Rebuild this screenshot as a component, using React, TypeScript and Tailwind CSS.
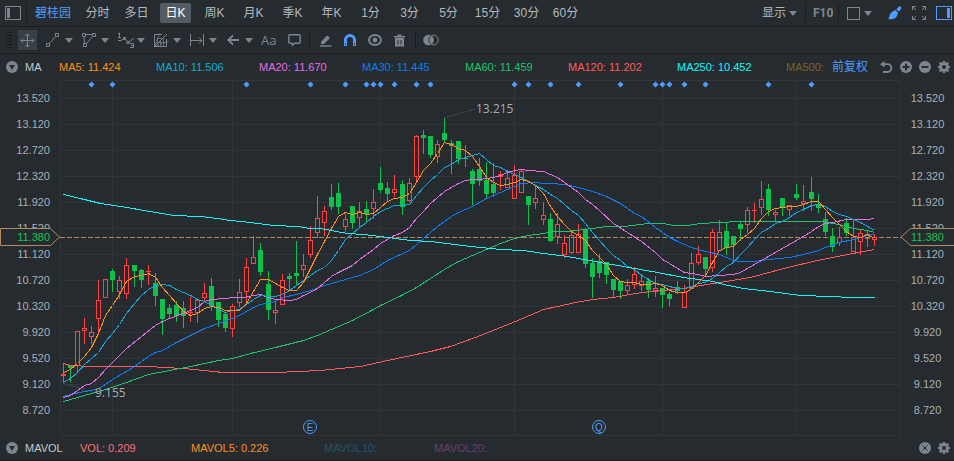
import type { ReactNode } from "react";

type Candle = [x: number, up: 0 | 1, open: number, close: number, high: number, low: number];

// x, rising flag, body top, body bottom, wick top, wick bottom
const candles: Candle[] = [
  [63, 1, 374, 376, 363, 383], [70, 0, 365, 368, 365, 382], [77, 1, 331, 366, 331, 372],
  [84, 1, 328, 331, 318, 344], [91, 1, 332, 337, 326, 344], [98, 1, 300, 319, 280, 335],
  [105, 1, 279, 298, 279, 298], [112, 0, 271, 280, 269, 292], [119, 1, 280, 292, 276, 299],
  [126, 1, 265, 294, 258, 299], [134, 0, 265, 271, 265, 287], [141, 0, 270, 280, 269, 288],
  [148, 1, 271, 272, 265, 285], [155, 0, 283, 296, 273, 306], [162, 0, 299, 319, 299, 335],
  [169, 0, 308, 314, 304, 318], [176, 0, 305, 316, 301, 322], [183, 0, 308, 316, 301, 328],
  [190, 1, 312, 313, 297, 322], [197, 1, 300, 313, 300, 323], [204, 1, 293, 298, 283, 302],
  [211, 0, 286, 306, 278, 311], [218, 0, 302, 320, 302, 327], [225, 0, 314, 328, 312, 332],
  [232, 1, 306, 329, 304, 337], [239, 1, 292, 303, 279, 307], [246, 1, 267, 292, 258, 303],
  [253, 1, 257, 264, 236, 264], [260, 0, 250, 272, 243, 276], [268, 0, 284, 310, 271, 320],
  [275, 1, 310, 313, 302, 324], [282, 1, 280, 305, 274, 305], [289, 0, 276, 279, 273, 291],
  [296, 0, 273, 276, 241, 286], [303, 1, 265, 270, 254, 277], [310, 1, 240, 255, 226, 258],
  [317, 1, 218, 233, 196, 238], [324, 1, 211, 223, 206, 236], [331, 0, 197, 207, 184, 210],
  [338, 0, 193, 207, 183, 214], [345, 1, 219, 227, 214, 232], [352, 0, 206, 223, 206, 229],
  [359, 1, 211, 218, 202, 228], [366, 0, 209, 214, 201, 223], [373, 1, 202, 209, 189, 219],
  [380, 0, 183, 190, 167, 193], [387, 0, 188, 194, 182, 202], [394, 1, 189, 193, 175, 197],
  [402, 0, 184, 207, 180, 215], [409, 1, 183, 201, 178, 202], [416, 1, 136, 177, 135, 181],
  [423, 0, 135, 138, 130, 154], [430, 0, 136, 155, 136, 158], [437, 1, 144, 157, 140, 163],
  [444, 0, 133, 140, 118, 143], [451, 0, 143, 146, 140, 174], [458, 0, 141, 159, 141, 164],
  [465, 0, 158, 159, 145, 167], [472, 0, 171, 184, 169, 205], [479, 0, 169, 181, 158, 186],
  [486, 0, 180, 194, 162, 198], [493, 0, 184, 193, 163, 197], [500, 1, 174, 177, 171, 190],
  [507, 1, 178, 188, 170, 188], [514, 1, 175, 199, 165, 199], [521, 1, 171, 193, 169, 193],
  [528, 0, 196, 205, 196, 225], [535, 1, 198, 203, 186, 209], [543, 1, 215, 220, 202, 225],
  [550, 0, 219, 241, 213, 242], [557, 1, 224, 237, 213, 244], [564, 1, 243, 255, 235, 258],
  [571, 1, 235, 253, 230, 254], [578, 1, 234, 253, 224, 253], [585, 0, 230, 264, 228, 268],
  [592, 0, 263, 277, 258, 298], [599, 0, 261, 273, 254, 278], [606, 0, 262, 275, 262, 284],
  [613, 0, 279, 290, 279, 298], [620, 0, 281, 291, 281, 299], [627, 1, 285, 291, 279, 294],
  [634, 1, 274, 285, 267, 289], [641, 1, 281, 286, 274, 291], [648, 0, 281, 290, 278, 298],
  [655, 1, 288, 291, 276, 297], [662, 0, 288, 295, 288, 308], [669, 0, 294, 299, 292, 306],
  [677, 0, 287, 291, 281, 294], [684, 1, 292, 308, 285, 308], [691, 1, 263, 289, 253, 289],
  [698, 1, 254, 263, 246, 265], [705, 0, 257, 269, 257, 275], [712, 1, 232, 268, 229, 272],
  [719, 1, 232, 251, 220, 251], [726, 0, 231, 248, 223, 255], [733, 0, 236, 245, 236, 263],
  [740, 0, 224, 229, 222, 241], [747, 1, 210, 225, 207, 233], [754, 1, 210, 211, 203, 223],
  [761, 1, 199, 208, 181, 215], [768, 0, 189, 210, 184, 216], [775, 1, 212, 215, 210, 222],
  [782, 0, 198, 207, 198, 216], [789, 1, 205, 210, 205, 216], [796, 0, 194, 198, 184, 200],
  [803, 1, 201, 204, 185, 211], [811, 0, 192, 199, 177, 211], [818, 0, 205, 208, 194, 213],
  [825, 0, 219, 232, 212, 236], [832, 0, 236, 247, 228, 252], [839, 1, 237, 243, 227, 246],
  [846, 0, 223, 233, 218, 236], [853, 1, 237, 252, 220, 252], [860, 1, 233, 242, 230, 255],
  [867, 1, 234, 239, 230, 247], [874, 1, 237, 240, 234, 246],
];

const averages: { name: string; color: string; points: string }[] = [
  {
    name: "MA120",
    color: "#ff5c5c",
    points:
      "63,363 70,365 90,366 117,366 150,366 163,367 183,368 203,370 223,372 250,372 275,372 320,370 360,366 387,360 430,351 450,346 475,337 500,327 515,321 543,309 557,306 575,302 592,299 613,297 641,292 663,290 673,289 691,287 700,285 720,282 750,277 787,267 817,260 847,254 874,249",
  },
  {
    name: "MA60",
    color: "#23c26f",
    points:
      "63,401 84,395 105,389 126,382 148,374 169,370 190,366 204,363 218,360 232,358 250,353 275,347 303,340 317,335 331,329 352,320 373,309 380,305 401,295 416,287 430,278 444,269 458,261 472,255 486,249 500,243 514,238 528,235 543,233 553,231 567,231 592,228 606,226 623,226 648,223 663,223 673,225 687,225 700,223 717,222 740,221 820,221 832,223 839,224 853,228 867,230 874,232",
  },
  {
    name: "MA30",
    color: "#0a7cf5",
    points:
      "63,396 70,394 84,391 91,390 98,388 105,384 112,379 126,371 134,366 148,356 155,352 162,350 176,342 190,335 204,328 218,323 232,318 239,315 253,307 260,304 275,301 282,297 296,294 310,290 324,285 338,281 359,275 373,269 387,260 409,250 416,244 430,232 437,226 451,216 458,212 472,206 486,198 500,192 514,186 521,183 535,182 543,183 550,183 564,184 578,187 592,191 606,196 620,203 634,213 641,216 655,227 669,237 677,241 691,247 705,251 719,254 733,260 740,261 754,261 768,259 789,257 803,254 818,250 825,247 839,242 853,239 867,235 874,234",
  },
  {
    name: "MA20",
    color: "#e66ee0",
    points:
      "63,397 70,395 77,390 84,385 91,383 98,377 105,369 112,362 126,348 141,336 155,325 162,321 169,318 183,313 190,310 197,307 204,301 211,299 225,298 232,297 243,297 253,295 260,294 268,297 275,299 289,300 296,299 303,295 310,292 317,288 324,282 331,276 338,272 352,265 359,259 373,249 380,243 387,239 394,235 402,232 409,227 416,218 423,211 430,203 437,197 444,191 451,187 458,183 465,180 472,179 479,179 486,178 493,177 500,175 507,172 514,170 521,169 528,170 543,171 550,174 557,177 564,182 571,187 578,192 585,199 592,204 599,210 613,223 627,232 641,241 655,252 662,259 669,263 677,268 684,272 698,274 705,276 719,275 733,274 740,272 747,268 754,264 761,260 775,252 789,244 796,240 803,236 811,231 818,226 825,223 832,222 846,219 867,219 874,218",
  },
  {
    name: "MA10",
    color: "#14a8dc",
    points:
      "63,382 70,378 77,372 84,364 91,358 98,352 105,341 112,333 119,324 126,313 134,303 141,295 148,289 155,285 162,284 169,285 176,289 183,292 190,295 197,299 204,301 211,305 218,309 225,312 232,310 239,309 246,304 253,299 260,295 268,296 275,296 282,294 289,290 296,285 303,280 310,275 317,270 324,267 331,260 338,250 345,239 352,233 359,227 366,222 373,216 380,211 387,208 394,205 402,205 409,204 416,195 423,187 430,180 437,174 444,167 451,164 458,159 465,157 472,155 479,153 486,159 493,165 500,167 507,171 514,174 521,177 528,181 535,185 543,189 550,194 557,198 564,204 571,210 578,215 585,223 592,232 599,240 606,248 613,255 620,260 627,266 634,269 641,275 648,279 655,283 662,284 669,286 677,288 684,288 691,286 698,283 705,282 712,278 719,272 726,266 733,262 740,254 747,247 754,239 761,232 768,228 775,223 782,221 789,217 796,212 803,209 811,205 818,204 825,206 832,211 839,214 846,216 853,219 860,222 867,226 874,230",
  },
  {
    name: "MA5",
    color: "#ff8f1f",
    points:
      "63,372 70,369 77,363 84,356 91,347 98,333 105,315 112,305 119,294 126,281 134,276 141,275 148,273 155,277 162,287 169,295 176,303 183,311 190,315 197,313 204,308 211,306 218,307 225,310 232,310 239,310 246,303 253,291 260,279 268,279 275,283 282,287 289,290 296,290 303,282 310,268 317,254 324,241 331,228 338,216 345,212 352,214 359,212 366,214 373,213 380,207 387,201 394,198 402,197 409,193 416,182 423,170 430,163 437,153 444,142 451,144 458,148 465,150 472,156 479,166 486,177 493,182 500,185 507,184 514,182 521,179 528,181 535,185 543,193 550,206 557,216 564,224 571,231 578,235 585,240 592,250 599,257 606,264 613,275 620,281 627,282 634,282 641,284 648,284 655,283 662,285 669,290 677,292 684,292 691,289 698,282 705,275 712,262 719,250 726,247 733,246 740,239 747,234 754,228 761,218 768,211 775,208 782,207 789,206 796,206 803,204 811,201 818,201 825,209 832,217 839,224 846,231 853,236 860,237 867,234 874,238",
  },
  {
    name: "MA250",
    color: "#12f7f7",
    points:
      "63,194 80,198 100,203 127,207 143,210 173,215 200,216 217,218 230,220 250,222 273,225 297,226 310,228 320,228 347,233 363,234 380,236 410,240 430,241 447,243 470,246 500,249 523,250 543,253 567,256 600,262 623,266 657,272 683,277 713,281 723,284 743,288 770,291 800,295 830,296 850,297 874,297",
  },
];

const events = [
  91, 112, 246, 310, 345, 366, 373, 380, 394, 416, 430, 514, 528, 550, 578, 620, 655, 662, 669, 684,
  705, 768, 811,
];
const gridX = [60, 112, 232, 380, 514, 662, 796, 900];
const prices = [
  "13.520", "13.120", "12.720", "12.320", "11.920", "11.520", "11.120", "10.720", "10.320", "9.920",
  "9.520", "9.120", "8.720",
];
const periods = [
  "分时", "多日", "日K", "周K", "月K", "季K", "年K", "1分", "3分", "5分", "15分", "30分", "60分",
];
const legend = [
  { text: "MA5: 11.424", style: "w-[97px] text-[#ff8f1f]" },
  { text: "MA10: 11.506", style: "w-[103px] text-[#14a8dc]" },
  { text: "MA20: 11.670", style: "w-[103px] text-[#e66ee0]" },
  { text: "MA30: 11.445", style: "w-[103px] text-[#0a7cf5]" },
  { text: "MA60: 11.459", style: "w-[103px] text-[#23c26f]" },
  { text: "MA120: 11.202", style: "w-[109px] text-[#ff5c5c]" },
  { text: "MA250: 10.452", style: "w-[109px] text-[#12f7f7]" },
  { text: "MA500:", style: "w-[46px] text-[#7b652e]" },
];

function Caret() {
  return (
    <svg width="8" height="5" viewBox="0 0 8 5" aria-hidden="true">
      <path d="M0 0H8L4 5Z" fill="#7d868f" />
    </svg>
  );
}

function Divider() {
  return <span className="h-5 w-px shrink-0 bg-[#1a1e21]" />;
}

function Tool({ label, children }: { label: string; children: ReactNode }) {
  return (
    <button aria-label={label} className="flex w-9 shrink-0 items-center gap-[3px]">
      <svg width="16" height="16" viewBox="0 0 16 16" fill="none" stroke="#7d868f" aria-hidden="true">
        {children}
      </svg>
      <Caret />
    </button>
  );
}

function Gear() {
  return (
    <svg width="12" height="12" viewBox="0 0 12 12" aria-hidden="true">
      <g fill="#7d868f">
        <rect x="4.7" y="0" width="2.6" height="12" />
        <rect x="4.7" y="0" width="2.6" height="12" transform="rotate(45 6 6)" />
        <rect x="4.7" y="0" width="2.6" height="12" transform="rotate(90 6 6)" />
        <rect x="4.7" y="0" width="2.6" height="12" transform="rotate(135 6 6)" />
        <circle cx="6" cy="6" r="4.4" />
      </g>
      <circle cx="6" cy="6" r="2" fill="#262b2f" />
    </svg>
  );
}

function Disc({ mark }: { mark: string }) {
  return (
    <svg width="12" height="12" viewBox="0 0 12 12" aria-hidden="true">
      <circle cx="6" cy="6" r="6" fill="#7d868f" />
      <path d={mark} stroke="#262b2f" strokeWidth="2" fill="none" />
    </svg>
  );
}

function Collapse() {
  return (
    <svg width="12" height="12" viewBox="0 0 12 12" aria-hidden="true">
      <circle cx="6" cy="6" r="6" fill="#7d868f" />
      <path d="M3 4H9L6 9Z" fill="#262b2f" />
    </svg>
  );
}

function PeriodBar() {
  return (
    <header className="flex h-[27px] items-center border-b border-[#1a1e21] text-xs text-[#b4babf]">
      <button aria-label="左侧栏" className="ml-[5px]">
        <svg width="16" height="14" viewBox="0 0 16 14" aria-hidden="true">
          <rect x="0.5" y="0.5" width="15" height="13" fill="none" stroke="#7d868f" />
          <rect x="2" y="2" width="3" height="10" fill="#7d868f" />
        </svg>
      </button>
      <span className="mr-2 ml-[5px] flex">
        <Divider />
      </span>
      <button className="mr-[11px] whitespace-nowrap text-[#4f9bff]">碧桂园</button>
      <nav className="flex flex-1 gap-2">
        {periods.map((p) => (
          <button
            key={p}
            className={
              p === "日K"
                ? "h-5 w-[31px] shrink-0 rounded-xs bg-[#535b64] text-center whitespace-nowrap text-white"
                : "h-5 w-[31px] shrink-0 text-center whitespace-nowrap"
            }
          >
            {p}
          </button>
        ))}
      </nav>
      <button className="mr-2 flex items-center gap-[3px] whitespace-nowrap">
        显示
        <Caret />
      </button>
      <Divider />
      <button className="mx-[7px] w-[18px] text-center font-['Liberation_Sans_Narrow','Roboto',sans-serif] text-xs font-bold text-[#7d868f]">
        F10
      </button>
      <Divider />
      <button aria-label="画框" className="mr-4 ml-2 flex items-center gap-1">
        <svg width="13" height="13" viewBox="0 0 13 13" aria-hidden="true">
          <rect x="0.5" y="0.5" width="12" height="12" fill="none" stroke="#7d868f" />
        </svg>
        <Caret />
      </button>
      <button aria-label="画笔" className="mr-[10px]">
        <svg width="14" height="14" viewBox="0 0 14 14" aria-hidden="true">
          <path d="M0 13C1.500 12 1.200 9 2.500 7.500C4 5.500 6 4.500 7.500 4L10 6.500C10 9 8.500 11.500 6.500 12.500C4.500 13.500 2 13.200 0 13Z" fill="#4f9bff" />
          <path d="M8.300 3.200L10.800 0.500C11.800 -0.300 13.800 1 13.300 2.500L11 5.800Z" fill="#4f9bff" />
        </svg>
      </button>
      <button aria-label="全屏" className="mr-[10px]">
        <svg width="14" height="14" viewBox="0 0 14 14" fill="none" stroke="#7d868f" aria-hidden="true">
          <path d="M0.500 4V0.500H4M0.500 0.500L4 4M10 0.500H13.500V4M13.500 0.500L10 4M0.500 10V13.500H4M0.500 13.500L4 10M10 13.500H13.500V10M13.500 13.500L10 10" />
        </svg>
      </button>
      <button aria-label="右侧栏" className="mr-[2px]">
        <svg width="16" height="14" viewBox="0 0 16 14" aria-hidden="true">
          <rect x="0.5" y="0.5" width="15" height="13" fill="none" stroke="#4f9bff" />
          <rect x="11" y="2" width="3" height="10" fill="#4f9bff" />
        </svg>
      </button>
    </header>
  );
}

function DrawingBar() {
  return (
    <div className="flex h-[27px] items-center border-b border-[#1a1e21] text-[#7d868f]">
      <svg className="mr-[6px] ml-[7px]" width="5" height="18" viewBox="0 0 5 18" aria-hidden="true">
        <path d="M0 1.500H5M0 4.500H5M0 7.500H5M0 10.500H5M0 13.500H5M0 16.500H5" stroke="#15181a" />
      </svg>
      <button aria-label="移动" className="mr-[9px] flex h-5 w-[19px] items-center justify-center bg-[#383f46]">
        <svg width="15" height="15" viewBox="0 0 15 15" fill="none" stroke="#7d868f" aria-hidden="true">
          <path d="M7.500 1V14M1 7.500H14M5.500 3L7.500 1L9.500 3M5.500 12L7.500 14L9.500 12M3 5.500L1 7.500L3 9.500M12 5.500L14 7.500L12 9.500" />
        </svg>
      </button>
      <Tool label="线段">
        <path d="M0.500 11.500H3.500V14.500H0.500ZM9.500 1.500H12.500V4.500H9.500ZM3.500 11.500L9.500 4.500" />
      </Tool>
      <Tool label="图形">
        <path d="M0.500 1.500H3.500V4.500H0.500ZM10.500 1.500H13.500V4.500H10.500ZM1.500 11.500H4.500V14.500H1.500ZM3.500 2.500H10.500M2 4.500L2.500 11.500M4.500 11.500L10.500 4.500" />
      </Tool>
      <Tool label="波浪">
        <path d="M0 2L1.500 1V5M0 5.500H3M0 8.500H3L6.500 6L10 10.500L15.500 6.500M12 11.500H15.500V15.500H12M13 13.500H15.500M5.500 5.500H7.500V7.500H5.500ZM9 9.500H11V11.500H9Z" />
      </Tool>
      <Tool label="江恩">
        <path d="M8 2.500H0.500V14.500H12.500V7M0.500 14.500L13 2" />
        <path d="M0.500 14.500L6 1M0.500 14.500L15 9" strokeDasharray="2 1" />
        <path d="M3 6.500H9M3.500 6V12M6.500 8V14M3 10.500H12M9.500 6V14" strokeOpacity="0.600" />
      </Tool>
      <Tool label="测距">
        <path d="M0.500 2V14M13.500 2V14M1 8.500H12M9 5.500L12 8.500L9 11.500" />
      </Tool>
      <Tool label="箭头">
        <path d="M2 8H13M7 3.500L2.200 8L7 12.500" strokeWidth="1.8" />
      </Tool>
      <button className="mr-3 -ml-px font-['Open_Sans',sans-serif] text-[13px] leading-5">Aa</button>
      <button aria-label="文字框" className="mr-2">
        <svg width="13" height="14" viewBox="0 0 13 14" fill="none" stroke="#7d868f" aria-hidden="true">
          <path
            d="M2 1.700H11A1.200 1.200 0 0 1 12.200 2.900V9A1.200 1.200 0 0 1 11 10.200H6.500L4.500 12.200L4 10.200H2A1.200 1.200 0 0 1 0.800 9V2.900A1.200 1.200 0 0 1 2 1.700Z"
            strokeWidth="1.400"
          />
        </svg>
      </button>
      <Divider />
      <button aria-label="编辑" className="mr-3 ml-[10px]">
        <svg width="12" height="13" viewBox="0 0 12 13" aria-hidden="true">
          <path d="M1 8L7 1.500L10 4L4 10H1Z" fill="#7d868f" />
          <path d="M0 12H11.500" stroke="#7d868f" strokeWidth="1.400" />
        </svg>
      </button>
      <button aria-label="磁铁" className="mr-3">
        <svg width="12" height="12" viewBox="0 0 12 12" fill="none" aria-hidden="true">
          <path d="M1.500 12V6A4.500 4.500 0 0 1 10.500 6V12" stroke="#4f9bff" strokeWidth="3" />
          <path d="M1 9.500H2V11H1ZM10 9.500H11V11H10Z" fill="#262b2f" />
        </svg>
      </button>
      <button aria-label="显示画线" className="mr-3">
        <svg width="14" height="12" viewBox="0 0 14 12" fill="none" stroke="#7d868f" aria-hidden="true">
          <ellipse cx="7" cy="6" rx="6" ry="5" strokeWidth="2" />
          <circle cx="7" cy="6" r="2" fill="#7d868f" />
        </svg>
      </button>
      <button aria-label="删除" className="mr-[10px]">
        <svg width="11" height="13" viewBox="0 0 11 13" aria-hidden="true">
          <path d="M0 2H3.500V0.500H7.500V2H11V3.500H0ZM1 4H10V12.500H1Z" fill="#7d868f" />
          <path d="M4 6V10.500M7 6V10.500" stroke="#262b2f" />
        </svg>
      </button>
      <Divider />
      <button aria-label="对比" className="ml-[7px]">
        <svg width="16" height="12" viewBox="0 0 16 12" aria-hidden="true">
          <circle cx="10.500" cy="6" r="4.800" fill="none" stroke="#7d868f" />
          <circle cx="5.500" cy="6" r="5.300" fill="#7d868f" />
          <path d="M8.500 1.500A5.200 5.200 0 0 0 8.500 10.500" fill="none" stroke="#262b2f" />
        </svg>
      </button>
    </div>
  );
}

function AverageLegend() {
  return (
    <div className="flex h-[26px] items-center pl-[6px] text-[11px]">
      <button aria-label="收起" className="mr-[7px]">
        <Collapse />
      </button>
      <span className="w-[34px] text-[#c3c9ce]">MA</span>
      {legend.map((item) => (
        <span key={item.text} className={`shrink-0 whitespace-nowrap ${item.style}`}>
          {item.text}
        </span>
      ))}
      <button className="text-xs whitespace-nowrap text-[#4f9bff]">前复权</button>
      <div className="mr-1 ml-auto flex shrink-0 gap-[7px]">
        <button aria-label="撤销">
          <svg width="13" height="12" viewBox="0 0 13 12" fill="none" aria-hidden="true">
            <path d="M2 3.200H7.500A3.900 3.900 0 0 1 7.500 11H3" stroke="#7d868f" strokeWidth="1.800" />
            <path d="M4.500 0V6.500L0 3.200Z" fill="#7d868f" />
          </svg>
        </button>
        <button aria-label="放大">
          <Disc mark="M6 2.500V9.500M2.500 6H9.500" />
        </button>
        <button aria-label="缩小">
          <Disc mark="M2.500 6H9.500" />
        </button>
        <button aria-label="设置">
          <Gear />
        </button>
      </div>
    </div>
  );
}

function Axis({ side }: { side: "left" | "right" }) {
  const left = side === "left";
  return (
    <div
      className={
        left
          ? "relative w-[60px] shrink-0 pt-[5px] pr-[10px] text-right text-[11px] text-[#a9afb4]"
          : "relative w-[53px] shrink-0 pt-[5px] text-center text-[11px] text-[#a9afb4]"
      }
    >
      {prices.map((p) => (
        <div key={p} className="h-[26px] leading-[26px]">
          {p}
        </div>
      ))}
      <div className="absolute inset-x-0 top-[148px] h-[18px]">
        <svg
          className="absolute inset-0"
          width={left ? 60 : 53}
          height="18"
          viewBox={left ? "0 0 60 18" : "0 0 53 18"}
          aria-hidden="true"
        >
          <path
            d={left ? "M0.500 0.500H50.500L59.500 9L50.500 17.500H0.500Z" : "M55 0.500H9.500L0 9L9.500 17.500H55"}
            fill="#262b2f"
            stroke="#b28a62"
          />
        </svg>
        <div className={left ? "relative pr-[10px] leading-[18px] text-[#16c454]" : "relative leading-[18px] text-[#16c454]"}>
          11.380
        </div>
      </div>
    </div>
  );
}

function CandleChart() {
  return (
    <svg
      className="h-[356px] min-w-0 flex-1"
      viewBox="60 80 841 356"
      preserveAspectRatio="none"
      role="img"
      aria-label="日K线图"
    >
      <g fill="#2f3539" shapeRendering="crispEdges">
        {gridX.map((x) => (
          <rect key={x} x={x} y={80} width={1} height={356} />
        ))}
        <rect x={60} y={80} width={841} height={1} />
        <rect x={60} y={435} width={841} height={1} />
        {prices.map((p, i) => (
          <rect key={p} x={60} y={98 + i * 26} width={841} height={1} />
        ))}
      </g>
      <path d="M60 237.500H901" stroke="#b28a62" strokeDasharray="5 2" shapeRendering="crispEdges" />
      <g stroke="#3d4347" shapeRendering="crispEdges">
        <path d="M444 118L475 109M63 383L95 393" />
      </g>
      <g shapeRendering="crispEdges">
        {candles.map(([x, up, top, bottom, high, low]) =>
          up ? (
            <g key={x} fill="#ff4343">
              <rect x={x} y={high} width={1} height={Math.max(0, top - high)} />
              <rect x={x} y={bottom} width={1} height={Math.max(0, low - bottom)} />
              {bottom - top < 2 ? (
                <rect x={x - 2} y={top} width={5} height={1} />
              ) : (
                <rect
                  x={x - 1.5}
                  y={top + 0.5}
                  width={4}
                  height={bottom - top - 1}
                  fill="none"
                  stroke="#ff4343"
                />
              )}
            </g>
          ) : (
            <g key={x} fill="#0fc04c">
              <rect x={x} y={high} width={1} height={low - high} />
              <rect x={x - 2} y={top} width={5} height={bottom - top} />
            </g>
          ),
        )}
      </g>
      <g fill="none" shapeRendering="crispEdges" transform="translate(0.5 0.5)">
        {averages.map((a) => (
          <polyline key={a.name} points={a.points} stroke={a.color} />
        ))}
      </g>
      <g fill="#4f9bff">
        {events.map((x) => (
          <path key={x} d={`M${x + 0.5} 81.500L${x + 3.5} 84.500L${x + 0.5} 87.500L${x - 2.5} 84.500Z`} />
        ))}
      </g>
      <g className="font-['Open_Sans',sans-serif] text-xs" fill="#a9afb4">
        <text x={476} y={113}>13.215</text>
        <text x={95} y={397}>9.155</text>
      </g>
      <g fill="none" stroke="#4f9bff">
        <circle cx={310} cy={427} r={6.5} />
        <circle cx={599} cy={427} r={6.5} />
      </g>
      <g className="text-[10px]" fill="#4f9bff" textAnchor="middle">
        <text x={310} y={430.5}>E</text>
        <text x={599} y={430.5}>Q</text>
      </g>
    </svg>
  );
}

function VolumeLegend() {
  return (
    <footer className="flex h-[25px] items-center border-b border-[#1a1e21] pl-[6px] text-[11px] whitespace-nowrap">
      <button aria-label="收起成交量" className="mr-[7px]">
        <Collapse />
      </button>
      <span className="w-[55px] text-[#c3c9ce]">MAVOL</span>
      <span className="w-[111px] text-[#ff7373]">VOL: 0.209</span>
      <span className="w-[133px] text-[#ff8f1f]">MAVOL5: 0.226</span>
      <span className="w-[110px] text-[#225469]">MAVOL10:</span>
      <span className="text-[#6b3d6c]">MAVOL20:</span>
      <div className="mr-1 ml-auto flex gap-[7px]">
        <button aria-label="关闭">
          <svg width="12" height="12" viewBox="0 0 12 12" aria-hidden="true">
            <circle cx="6" cy="6" r="6" fill="#7d868f" />
            <path d="M3.500 3.500L8.500 8.500M8.500 3.500L3.500 8.500" stroke="#262b2f" />
          </svg>
        </button>
        <button aria-label="成交量设置">
          <Gear />
        </button>
      </div>
    </footer>
  );
}

export default function App() {
  return (
    <main className="w-full overflow-hidden bg-[#262b2f] font-['Liberation_Sans','Noto_Sans_CJK_SC',sans-serif]">
      <PeriodBar />
      <DrawingBar />
      <AverageLegend />
      <div className="flex">
        <Axis side="left" />
        <CandleChart />
        <Axis side="right" />
      </div>
      <VolumeLegend />
    </main>
  );
}
